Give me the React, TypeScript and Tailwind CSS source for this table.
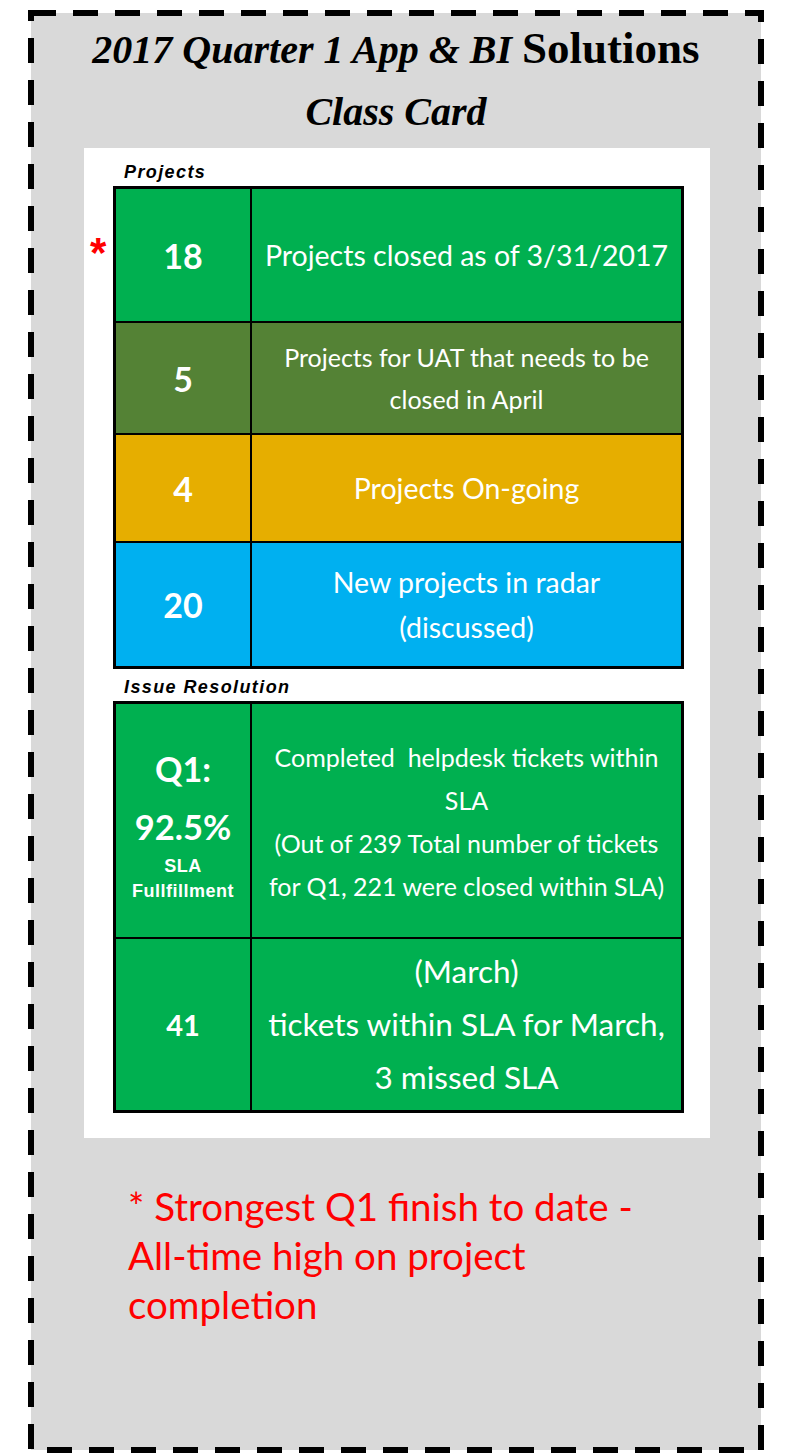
import React from 'react';

const cal = "font-['Lato','Open_Sans',sans-serif]";

type Row = { num: string; text: React.ReactNode; bg: string; h: string; textCls: string };

const projectRows: Row[] = [
  { num: '18', text: 'Projects closed as of 3/31/2017', bg: 'bg-[#00b050]', h: 'h-[132px]', textCls: 'text-[28.5px] leading-[44px]' },
  {
    num: '5',
    text: (
      <>
        Projects for UAT that needs to be
        <br />
        closed in April
      </>
    ),
    bg: 'bg-[#548235]',
    h: 'h-[110px]',
    textCls: 'text-[25px] leading-[42px]',
  },
  { num: '4', text: 'Projects On-going', bg: 'bg-[#e6ae00]', h: 'h-[106px]', textCls: 'text-[28.5px] leading-[44px]' },
  {
    num: '20',
    text: (
      <>
        New projects in radar
        <br />
        (discussed)
      </>
    ),
    bg: 'bg-[#00b0f0]',
    h: 'h-[123px]',
    textCls: 'text-[28.5px] leading-[45px]',
  },
];

const SectionLabel = ({ children, top }: { children: React.ReactNode; top: string }) => (
  <div
    className={`pl-[40px] ${top} font-['Liberation_Sans',sans-serif] italic font-bold text-[18px] leading-[18px] tracking-[1.4px] text-black`}
  >
    {children}
  </div>
);

// dashed frame drawn over the gray card
const DashedFrame = () => (
  <svg className="absolute left-[28px] top-[10px] pointer-events-none" width="736" height="1443">
    <rect x="3" y="3" width="730" height="1437" fill="none" stroke="#000" strokeWidth="6" strokeDasharray="25 17" />
  </svg>
);

const App: React.FC = () => {
  return (
    <div className="relative w-[794px] h-[1453px] bg-white pt-[13px] pl-[31px]">
      <div className="w-[730px] h-[1437px] bg-[#d9d9d9] flex flex-col items-center">
        {/* Title */}
        <div className="mt-[11px] font-['Liberation_Serif',serif] italic font-bold text-[40px] leading-[48px] text-black whitespace-nowrap">
          2017 Quarter 1 App &amp; BI <span className="not-italic text-[45px]">Solutions</span>
        </div>
        <div className="mt-[14px] font-['Liberation_Serif',serif] italic font-bold text-[40px] leading-[48px] text-black">
          Class Card
        </div>

        {/* White panel */}
        <div className="mt-[12px] ml-[2px] w-[626px] h-[990px] bg-white relative">
          <span className="absolute left-[6px] top-[84px] text-[#ff0000] text-[42px] font-bold font-['Liberation_Sans',sans-serif] leading-none">
            *
          </span>
          <div className={`${cal} text-white`}>
            <SectionLabel top="pt-[15px] h-[38px]">Projects</SectionLabel>
            <div className="ml-[29px] w-[571px] border-[3px] border-black bg-black flex flex-col gap-[2px]">
              {projectRows.map((r, i) => (
                <div key={i} className={`flex ${r.h} gap-[2px]`}>
                  <div className={`${r.bg} w-[134px] flex items-center justify-center font-bold text-[34px]`}>{r.num}</div>
                  <div className={`${r.bg} flex-1 flex items-center justify-center text-center ${r.textCls}`}>{r.text}</div>
                </div>
              ))}
            </div>

            <SectionLabel top="pt-[9px] h-[32px]">Issue Resolution</SectionLabel>
            <div className="ml-[29px] w-[571px] border-[3px] border-black bg-black flex flex-col gap-[2px]">
              <div className="flex h-[233px] gap-[2px]">
                <div className="bg-[#00b050] w-[134px] flex flex-col items-center justify-center font-bold text-center">
                  <div className="text-[34px] leading-[61px]">Q1:</div>
                  <div className="text-[34.5px] leading-[55px]">92.5%</div>
                  <div className="text-[18px] leading-[25px] tracking-[0.5px] font-['Liberation_Sans',sans-serif]">SLA</div>
                  <div className="text-[18px] leading-[25px] tracking-[0.5px] font-['Liberation_Sans',sans-serif]">Fullfillment</div>
                </div>
                <div className="bg-[#00b050] flex-1 flex items-center justify-center text-center text-[25px] leading-[43px]">
                  <div className="mt-[2px]">
                    Completed&nbsp; helpdesk tickets within
                    <br />
                    SLA
                    <br />
                    (Out of 239 Total number of tickets
                    <br />
                    for Q1, 221 were closed within SLA)
                  </div>
                </div>
              </div>
              <div className="flex h-[171px] gap-[2px]">
                <div className="bg-[#00b050] w-[134px] flex items-center justify-center font-bold text-[29px]">41</div>
                <div className="bg-[#00b050] flex-1 flex items-center justify-center text-center text-[31.5px] leading-[53px]">
                  <div>
                    (March)
                    <br />
                    tickets within SLA for March,
                    <br />
                    3 missed SLA
                  </div>
                </div>
              </div>
            </div>
          </div>
        </div>

        {/* Footnote */}
        <div className={`self-start ml-[97px] mt-[44px] ${cal} text-[#ff0000] text-[38.5px] leading-[49px]`}>
          * Strongest Q1 finish to date -
          <br />
          All-time high on project
          <br />
          completion
        </div>
      </div>
      <DashedFrame />
    </div>
  );
};

export default App;
